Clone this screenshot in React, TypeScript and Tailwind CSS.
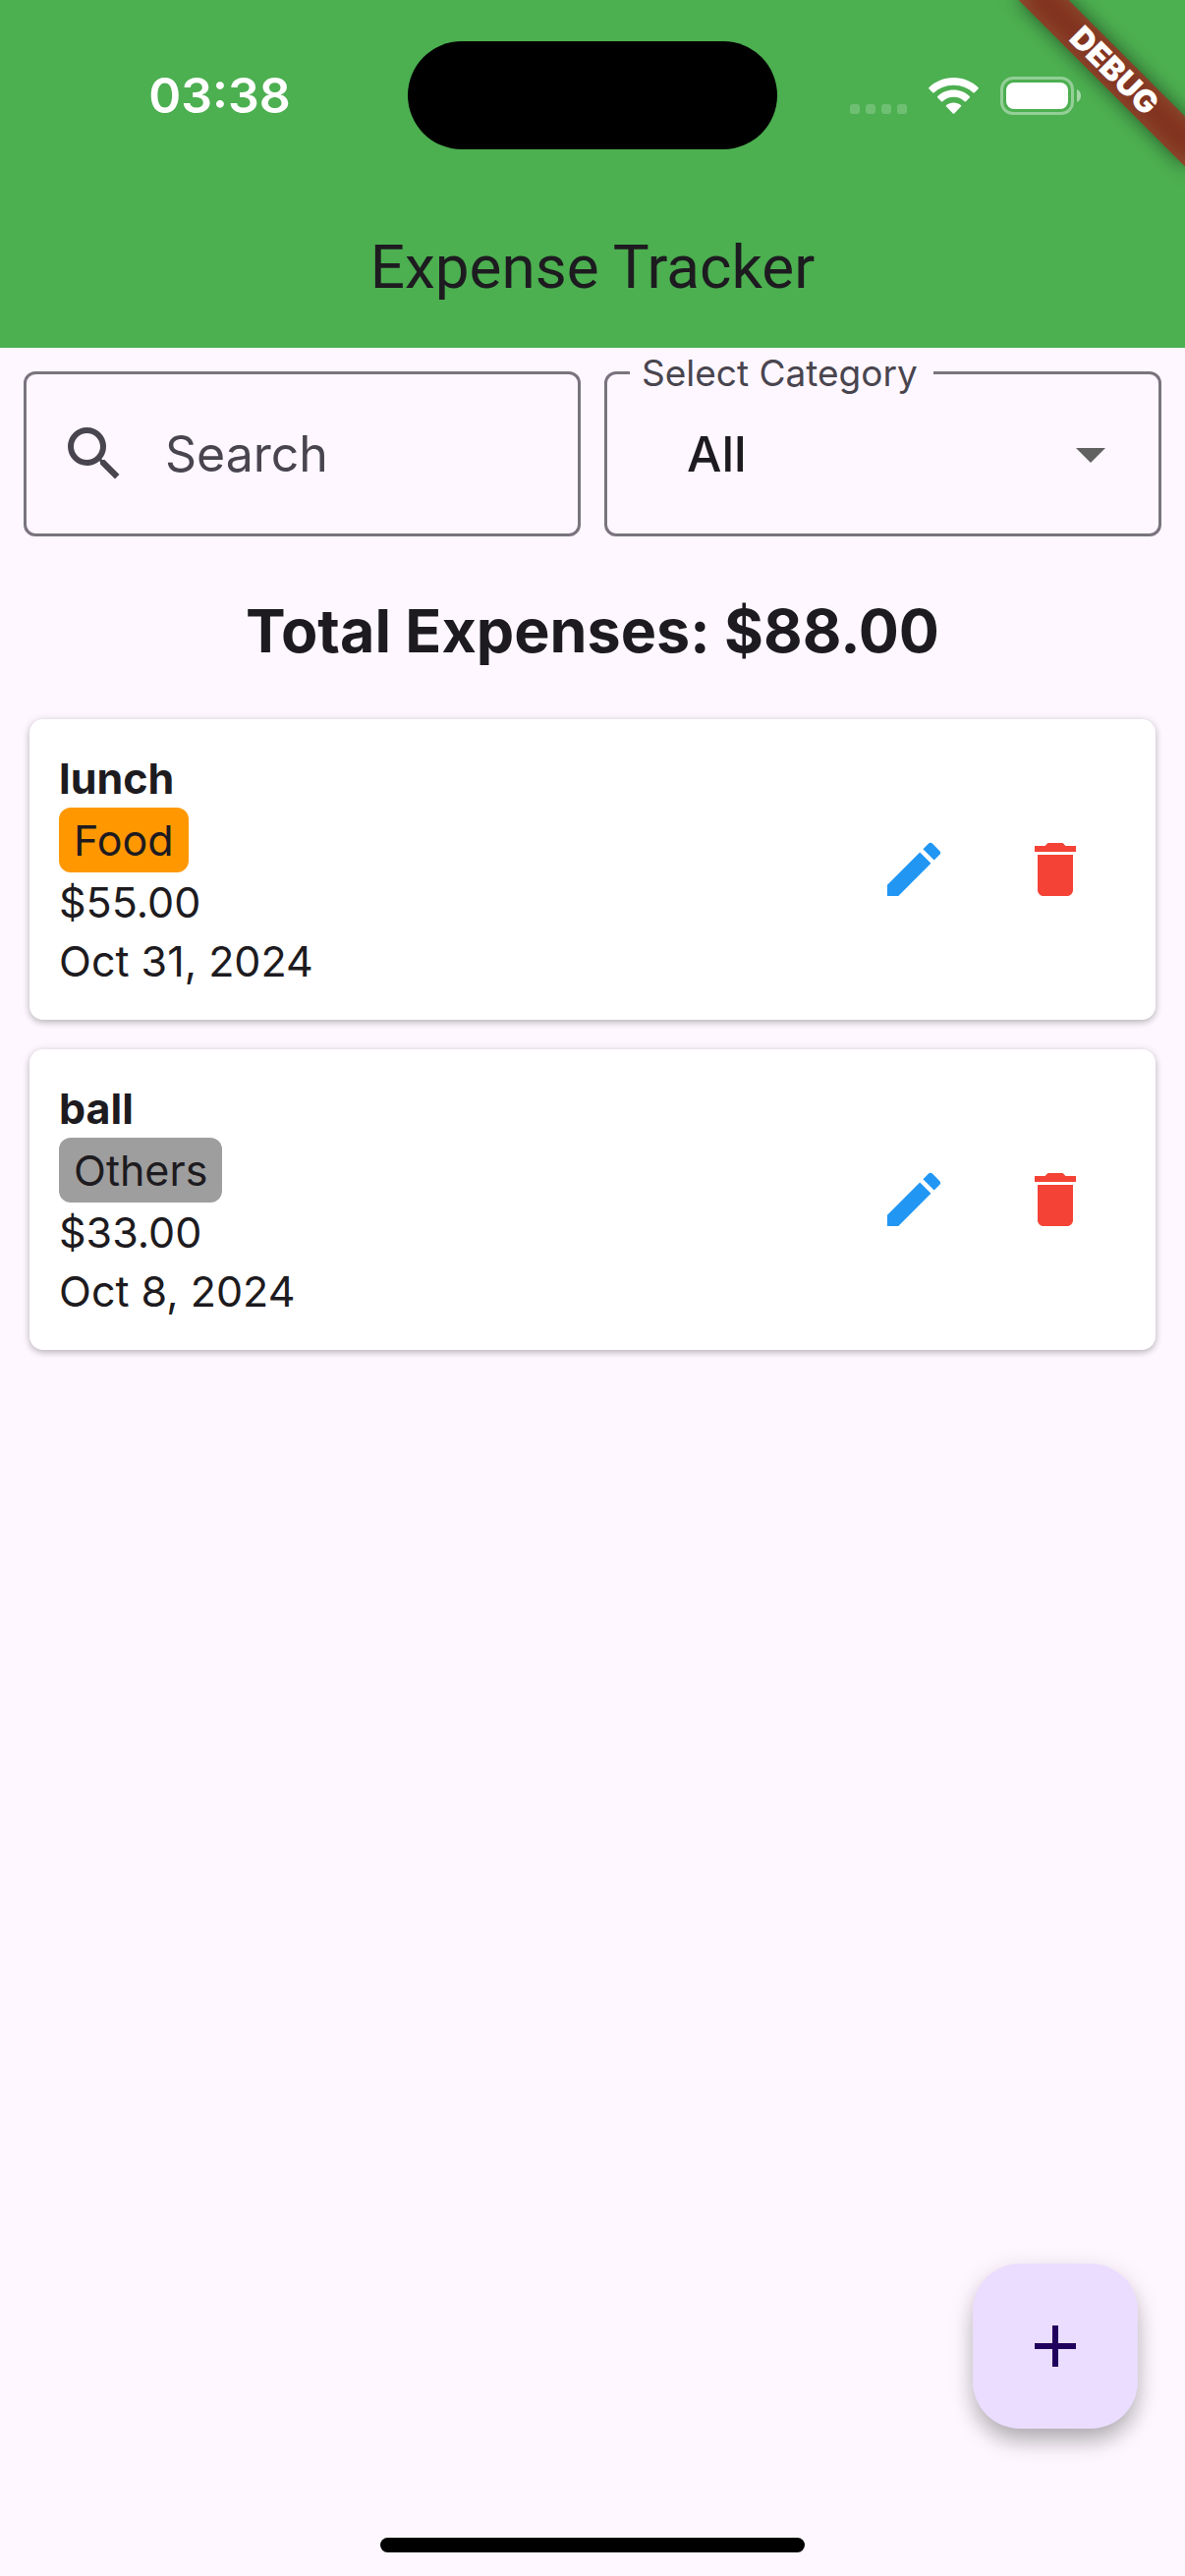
import { useState } from "react";
import { MdAdd, MdArrowDropDown, MdDelete, MdEdit, MdSearch } from "react-icons/md";

type Expense = {
  title: string;
  category: string;
  chip: string;
  amount: number;
  date: string;
};

const initialExpenses: Expense[] = [
  { title: "lunch", category: "Food", chip: "bg-[#ff9800]", amount: 55, date: "Oct 31, 2024" },
  { title: "ball", category: "Others", chip: "bg-[#9e9e9e]", amount: 33, date: "Oct 8, 2024" },
];

function SignalDots() {
  return (
    <div className="mt-7 flex gap-1.5">
      {[0, 1, 2, 3].map((dot) => (
        <span key={dot} className="size-2.5 rounded-[3px] bg-white/20" />
      ))}
    </div>
  );
}

function WifiIcon() {
  return (
    <svg viewBox="0 0 51 37" className="h-[37px] w-[51px]" fill="#fff" aria-hidden="true">
      <path d="M25.5 0C35.3 0 44.200 3.800 50.500 10.100a1 1 0 0 1 0 1.400l-3.700 3.800a1 1 0 0 1-1.400 0A28.500 28.500 0 0 0 25.500 7.700A28.500 28.500 0 0 0 5.600 15.300a1 1 0 0 1-1.400 0L.5 11.500a1 1 0 0 1 0-1.400C6.800 3.800 15.700 0 25.500 0Z" />
      <path d="M25.500 12.600c6.300 0 12 2.400 16.200 6.400a1 1 0 0 1 0 1.500L38 24.200a1 1 0 0 1-1.400 0a16.200 16.200 0 0 0-22.200 0a1 1 0 0 1-1.400 0L9.300 20.500a1 1 0 0 1 0-1.500c4.200-4 9.900-6.400 16.200-6.400Z" />
      <path d="M25.500 25.400c2.800 0 5.400 1 7.400 2.700a1 1 0 0 1 0 1.500l-6.700 6.900a1 1 0 0 1-1.400 0l-6.700-6.900a1 1 0 0 1 0-1.500c2-1.700 4.600-2.700 7.400-2.700Z" />
    </svg>
  );
}

function BatteryIcon() {
  return (
    <svg viewBox="0 0 82 39" className="h-[39px] w-[82px]" aria-hidden="true">
      <rect x="1.500" y="1.500" width="72" height="36" rx="11.500" fill="none" stroke="#fff" strokeOpacity=".4" strokeWidth="3" />
      <rect x="6" y="6" width="63" height="27" rx="8" fill="#fff" />
      <path d="M78 13c2.500 1 4 3.500 4 6.500s-1.500 5.500-4 6.500Z" fill="#fff" fillOpacity=".5" />
    </svg>
  );
}

function DebugBanner() {
  return (
    <div className="pointer-events-none absolute top-0 right-0 size-60 overflow-hidden">
      <div className="absolute top-[54px] -right-12 h-9 w-60 rotate-45">
        <div className="absolute inset-0 bg-black/50 blur-[10px]" />
        <div className="relative flex h-9 items-center justify-center bg-[#b71c1c]/63 text-[32px] leading-9 font-black text-white">
          DEBUG
        </div>
      </div>
    </div>
  );
}

function ExpenseCard({ expense, onDelete }: { expense: Expense; onDelete: () => void }) {
  return (
    <li className="flex items-center justify-between rounded-[14px] bg-white p-[30px] shadow-[0_3px_6px_rgba(0,0,0,0.17),0_1px_8px_rgba(0,0,0,0.14)]">
      <div className="text-[43px] leading-[60px]">
        <h2 className="font-bold">{expense.title}</h2>
        <p className={`w-fit rounded-xl px-[15px] py-[3px] ${expense.chip}`}>{expense.category}</p>
        <p>${expense.amount.toFixed(2)}</p>
        <p>{expense.date}</p>
      </div>
      <div className="flex">
        <button type="button" aria-label={`Edit ${expense.title}`} className="flex size-36 items-center justify-center rounded-full text-[#2196f3]">
          <MdEdit className="size-[72px]" />
        </button>
        <button type="button" aria-label={`Delete ${expense.title}`} onClick={onDelete} className="flex size-36 items-center justify-center rounded-full text-[#f44336]">
          <MdDelete className="size-[72px]" />
        </button>
      </div>
    </li>
  );
}

export default function App() {
  const [expenses, setExpenses] = useState(initialExpenses);
  const [query, setQuery] = useState("");
  const [category, setCategory] = useState("All");

  const visible = expenses.filter(
    (e) => (category === "All" || e.category === category) && e.title.toLowerCase().includes(query.toLowerCase()),
  );
  const total = visible.reduce((sum, e) => sum + e.amount, 0);

  return (
    <div className="relative flex min-h-screen flex-col bg-[#fef7ff] font-[Inter,Roboto,sans-serif] text-[#1d1b20]">
      <header className="bg-[#4caf50]">
        <div className="grid grid-cols-[1fr_376px_1fr] items-center pt-[42px]">
          <time className="pl-8 text-center text-[50px] leading-[60px] font-semibold text-white">03:38</time>
          <div className="h-[110px] rounded-full bg-black" />
          <div className="flex items-center justify-end gap-[22px] pr-[106px]">
            <SignalDots />
            <WifiIcon />
            <BatteryIcon />
          </div>
        </div>
        <h1 className="pt-[78px] pb-10 text-center font-[Roboto,sans-serif] text-[62px] leading-[84px]">Expense Tracker</h1>
      </header>

      <main className="flex-1">
        <div className="grid grid-cols-2 gap-6 p-6">
          <label className="flex h-[168px] items-center gap-9 rounded-xl border-[3px] border-[#79747e] px-[33px] text-[#49454f]">
            <MdSearch className="size-[72px] shrink-0" />
            <input
              type="text"
              aria-label="Search"
              placeholder="Search"
              value={query}
              onChange={(e) => setQuery(e.target.value)}
              className="w-full min-w-0 bg-transparent text-[50px] leading-[72px] outline-none placeholder:text-[#49454f]"
            />
          </label>

          <div className="relative flex h-[168px] items-center rounded-xl border-[3px] border-[#79747e]">
            <label htmlFor="category" className="absolute -top-[22px] left-[23px] bg-[#fef7ff] pr-4 pl-3 text-[37px] leading-[42px] text-[#49454f]">
              Select Category
            </label>
            <select
              id="category"
              value={category}
              onChange={(e) => setCategory(e.target.value)}
              className="h-full w-full appearance-none bg-transparent pr-28 pl-[81px] text-[50px] leading-[72px] font-medium outline-none"
            >
              <option>All</option>
              <option>Food</option>
              <option>Others</option>
            </select>
            <MdArrowDropDown className="pointer-events-none absolute right-[33px] size-[72px] text-[#616161]" />
          </div>
        </div>

        <p className="pt-[30px] text-center text-[61px] leading-[84px] font-bold">Total Expenses: ${total.toFixed(2)}</p>

        <ul className="flex flex-col gap-[30px] px-[30px] pt-[48px]">
          {visible.map((expense) => (
            <ExpenseCard
              key={expense.title}
              expense={expense}
              onDelete={() => setExpenses(expenses.filter((e) => e !== expense))}
            />
          ))}
        </ul>
      </main>

      <footer className="flex justify-center pb-6">
        <div className="h-[15px] w-[432px] rounded-full bg-black" />
      </footer>

      <button
        type="button"
        aria-label="Add expense"
        className="fixed right-12 bottom-[150px] flex size-[168px] items-center justify-center rounded-[48px] bg-[#eaddff] text-[#21005d] shadow-[0_16px_24px_-4px_rgba(0,0,0,0.24),0_6px_26px_rgba(0,0,0,0.14)]"
      >
        <MdAdd className="size-[72px]" />
      </button>

      <DebugBanner />
    </div>
  );
}
